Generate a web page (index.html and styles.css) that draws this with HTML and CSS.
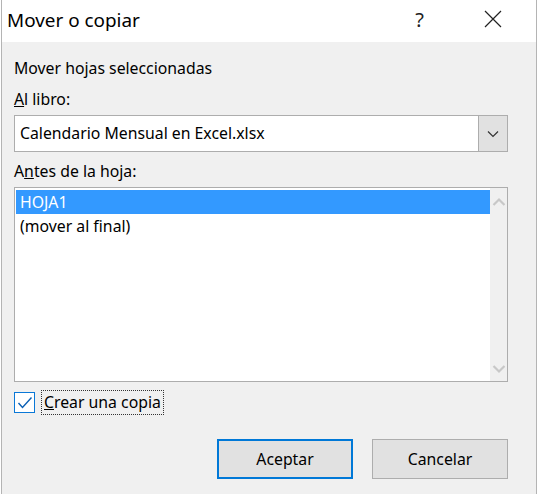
FILE: index.html
```html
<!DOCTYPE html>
<html lang="es">
<head>
<meta charset="utf-8">
<link rel="stylesheet" href="styles.css">
</head>
<body>
<div class="dialog">
  <div class="titlebar">
    <span class="title">Mover o copiar</span>
    <span class="help">?</span>
    <svg class="close" width="18" height="18" viewBox="0 0 18 18"><path d="M1 1L17 17M17 1L1 17" stroke="#222" stroke-width="1.2" fill="none"/></svg>
  </div>
  <div class="content">
    <div class="label first">Mover hojas seleccionadas</div>
    <div class="label"><u>A</u>l libro:</div>
    <div class="combo">
      <span class="combo-text">Calendario Mensual en Excel.xlsx</span>
      <span class="combo-btn"><svg width="12" height="8" viewBox="0 0 12 8"><path d="M1 1.5L6 6.5L11 1.5" stroke="#333" stroke-width="1.2" fill="none"/></svg></span>
    </div>
    <div class="label third">A<u>n</u>tes de la hoja:</div>
    <div class="listbox">
      <div class="items">
        <div class="item selected">HOJA1</div>
        <div class="item">(mover al final)</div>
      </div>
      <div class="scroll">
        <svg width="14" height="10" viewBox="0 0 14 10"><path d="M1.5 8L7 2.5L12.5 8" stroke="#c8c8c8" stroke-width="2.2" fill="none"/></svg>
        <svg width="14" height="10" viewBox="0 0 14 10"><path d="M1.5 2L7 7.5L12.5 2" stroke="#c8c8c8" stroke-width="2.2" fill="none"/></svg>
      </div>
    </div>
    <div class="check-row">
      <span class="checkbox"><svg width="16" height="14" viewBox="0 0 16 14"><path d="M1.5 7L5.5 11.5L14.5 1.5" stroke="#0a5fb4" stroke-width="1.4" fill="none"/></svg></span>
      <span class="check-label"><u>C</u>rear una copia</span>
    </div>
    <div class="buttons">
      <button class="btn default">Aceptar</button>
      <button class="btn">Cancelar</button>
    </div>
  </div>
</div>
</body>
</html>
```
FILE: styles.css
```css
html, body {
  margin: 0;
  padding: 0;
  background: #ffffff;
}
body {
  width: 540px;
  height: 494px;
  overflow: hidden;
  font-family: "Noto Sans", "Open Sans", sans-serif;
  color: #000;
}
.dialog {
  margin-left: 1px;
  width: 536px;
  height: 494px;
  box-sizing: border-box;
  border-left: 1px solid #b4b4b4;
  border-right: 1px solid #b4b4b4;
  background: #f0f0f0;
  display: flex;
  flex-direction: column;
}
.titlebar {
  height: 42px;
  background: #fff;
  display: flex;
  align-items: center;
  padding-left: 5px;
  flex: none;
}
.title {
  font-size: 18.9px;
  color: #000;
  flex: 1;
  margin-top: -2px;
}
.help {
  font-size: 20px;
  color: #222;
  margin-right: 60px;
  margin-top: -4px;
}
.close {
  margin-right: 34px;
  margin-top: -4px;
}
.content {
  padding: 0 28px 0 12px;
  display: flex;
  flex-direction: column;
  font-size: 15.8px;
}
.label {
  height: 31px;
  line-height: 31px;
}
.label.first {
  margin-top: 11px;
}
.label.third {
  margin-top: 4px;
}
.combo {
  height: 37px;
  box-sizing: border-box;
  border: 1px solid #adadad;
  background: #fff;
  display: flex;
  align-items: stretch;
}
.combo-text {
  flex: 1;
  padding-left: 5px;
  line-height: 35px;
}
.combo-btn {
  width: 28px;
  background: #e1e1e1;
  border-left: 1px solid #adadad;
  display: flex;
  align-items: center;
  justify-content: center;
}
.listbox {
  height: 195px;
  box-sizing: border-box;
  border: 1px solid #adadad;
  background: #fff;
  display: flex;
  padding: 2px 1px 2px 1px;
}
.items {
  flex: 1;
}
.item {
  height: 24px;
  line-height: 24px;
  padding-left: 4px;
}
.item.selected {
  background: #3399ff;
  color: #fff;
}
.scroll {
  width: 17px;
  background: #f0f0f0;
  display: flex;
  flex-direction: column;
  justify-content: space-between;
  align-items: center;
  padding: 9px 0 7px;
  margin: -2px -1px -2px 0;
}
.check-row {
  margin-top: 8px;
  display: flex;
  align-items: center;
}
.checkbox {
  width: 21px;
  height: 21px;
  box-sizing: border-box;
  border: 1px solid #0a78d7;
  background: #fff;
  display: flex;
  align-items: center;
  justify-content: center;
}
.check-label {
  margin-left: 6px;
  padding: 0 2px;
  border: 1px dotted #333;
  line-height: 23px;
}
.buttons {
  margin-top: 24px;
  display: flex;
  justify-content: flex-end;
  gap: 19px;
}
.btn {
  width: 136px;
  height: 40px;
  box-sizing: border-box;
  background: #e1e1e1;
  border: 1px solid #adadad;
  font-family: "Noto Sans", "Open Sans", sans-serif;
  font-size: 15.8px;
  color: #000;
  padding: 0;
}
.btn.default {
  border: 2px solid #0078d7;
}
```
